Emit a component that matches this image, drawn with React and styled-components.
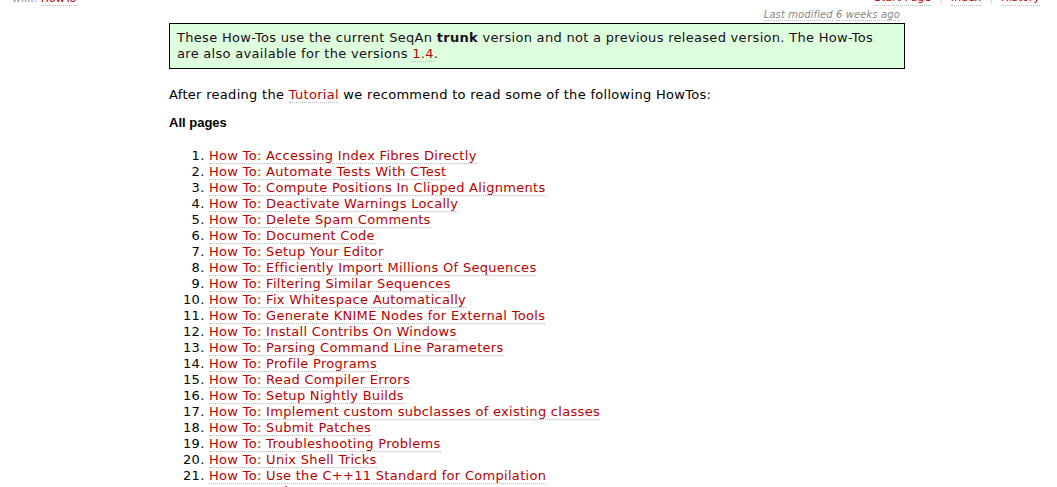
import React from "react";
import styled, { createGlobalStyle } from "styled-components";

const GlobalStyle = createGlobalStyle`
  body {
    margin: 0;
    background: #fff;
    color: #000;
    font-family: "DejaVu Sans", Verdana, sans-serif;
    font-size: 13px;
    letter-spacing: 0.3px;
    overflow: hidden;
  }
`;

const Page = styled.div`
  margin-top: -9px;
`;

const TopBar = styled.div`
  display: flex;
  justify-content: space-between;
  align-items: flex-end;
  height: 15px;
  padding: 0 17px 0 12px;
  font-size: 11px;
  letter-spacing: 0;
  line-height: 14px;
`;

const Crumbs = styled.div`
  color: #999;
`;

const CtxNav = styled.div`
  display: flex;
  gap: 8px;
  color: #ccc;
`;

const Link = styled.a`
  color: #b00;
  text-decoration: none;
  border-bottom: 1px dotted #bbb;
`;

const Content = styled.div`
  width: 736px;
  margin-left: 169px;
`;

const Modified = styled.div`
  text-align: right;
  padding-right: 5px;
  font-size: 10px;
  font-style: italic;
  letter-spacing: 0.1px;
  line-height: 14px;
  color: #888;
  margin-top: 2px;

  span {
    border-bottom: 1px dotted #bbb;
  }
`;

const Note = styled.div`
  margin-top: 1px;
  background: #ddffdd;
  border: 1px solid #000;
  padding: 6px 7px;
  line-height: 16px;
  color: #1a0d1a;
`;

const Para = styled.p`
  margin: 18px 0 0 0;
  line-height: 16px;
`;

const Heading = styled.h3`
  margin: 12px 0 0 0;
  font-family: "Liberation Sans", Arial, sans-serif;
  font-size: 13px;
  font-weight: bold;
  letter-spacing: 0;
  line-height: 16px;
`;

const List = styled.ol`
  margin: 17px 0 0 0;
  padding-left: 40px;
  line-height: 16px;
`;

const items = [
  "Accessing Index Fibres Directly",
  "Automate Tests With CTest",
  "Compute Positions In Clipped Alignments",
  "Deactivate Warnings Locally",
  "Delete Spam Comments",
  "Document Code",
  "Setup Your Editor",
  "Efficiently Import Millions Of Sequences",
  "Filtering Similar Sequences",
  "Fix Whitespace Automatically",
  "Generate KNIME Nodes for External Tools",
  "Install Contribs On Windows",
  "Parsing Command Line Parameters",
  "Profile Programs",
  "Read Compiler Errors",
  "Setup Nightly Builds",
  "Implement custom subclasses of existing classes",
  "Submit Patches",
  "Troubleshooting Problems",
  "Unix Shell Tricks",
  "Use the C++11 Standard for Compilation",
  "Write Tests",
];

export default function App() {
  return (
    <>
      <GlobalStyle />
      <Page>
        <TopBar>
          <Crumbs>
            wiki: <Link href="#">HowTo</Link>
          </Crumbs>
          <CtxNav>
            <Link href="#">Start Page</Link>|<Link href="#">Index</Link>|
            <Link href="#">History</Link>
          </CtxNav>
        </TopBar>
        <Content>
          <Modified>
            <span>Last modified</span> <span>6 weeks ago</span>
          </Modified>
          <Note>
            These How-Tos use the current SeqAn <b>trunk</b> version and not a
            previous released version. The How-Tos are also available for the
            versions <Link href="#">1.4</Link>.
          </Note>
          <Para>
            After reading the <Link href="#">Tutorial</Link> we recommend to read
            some of the following HowTos:
          </Para>
          <Heading>All pages</Heading>
          <List>
            {items.map((t) => (
              <li key={t}>
                <Link href="#">How To: {t}</Link>
              </li>
            ))}
          </List>
        </Content>
      </Page>
    </>
  );
}
